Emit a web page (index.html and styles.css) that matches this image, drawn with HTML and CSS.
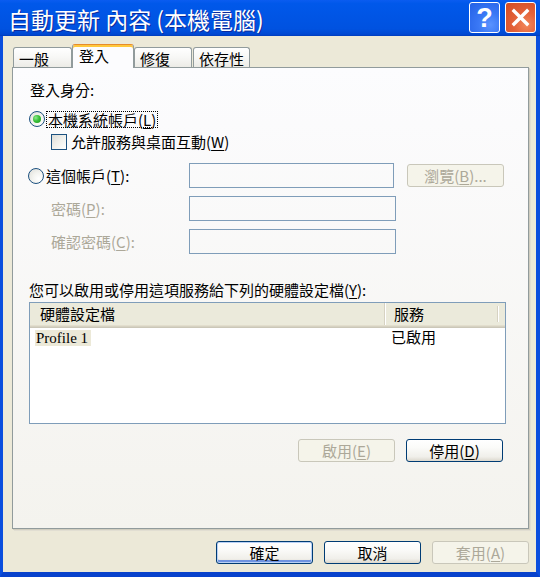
FILE: index.html
```html
<!DOCTYPE html>
<html>
<head>
<meta charset="utf-8">
<title>自動更新 內容 (本機電腦)</title>
<link rel="stylesheet" href="styles.css">
</head>
<body>
<div class="window">
  <div class="titlebar">
    <div class="title">自動更新 內容 (本機電腦)</div>
    <div class="tb-buttons">
      <div class="tb-btn help"><span class="qmark">?</span></div>
      <div class="tb-btn close">
        <svg class="xicon" viewBox="0 0 31 31" width="31" height="31"><path d="M8.5 8.5 L22.5 22.5 M22.5 8.5 L8.5 22.5" stroke="#fff" stroke-width="3.6" stroke-linecap="square" fill="none"/></svg>
      </div>
    </div>
  </div>
  <div class="client">
    <div class="tabs">
      <div class="tab t1">一般</div>
      <div class="tab sel t2">登入</div>
      <div class="tab t3">修復</div>
      <div class="tab t4">依存性</div>
    </div>
    <div class="panel">
      <div class="line">登入身分:</div>
      <div class="line radio-row"><span class="radio on"></span><span class="focus">本機系統帳戶(<u>L</u>)</span></div>
      <div class="line check-row"><span class="check"></span><span>允許服務與桌面互動(<u>W</u>)</span></div>
      <div class="acct">
        <div class="line acct-radio"><span class="radio"></span><span>這個帳戶(<u>T</u>):</span></div>
        <div class="field f1"></div>
        <div class="btn disabled browse">瀏覽(<u>B</u>)...</div>
        <div class="sub dis">密碼(<u>P</u>):</div>
        <div class="field"></div>
        <div></div>
        <div class="sub dis">確認密碼(<u>C</u>):</div>
        <div class="field"></div>
        <div></div>
      </div>
      <div class="line list-label">您可以啟用或停用這項服務給下列的硬體設定檔(<u>Y</u>):</div>
      <div class="list">
        <div class="list-head">
          <div class="col c1">硬體設定檔</div>
          <div class="col c2">服務</div>
          <div class="col c3"></div>
        </div>
        <div class="list-row">
          <div class="cell c1"><span class="profile">Profile 1</span></div>
          <div class="cell c2">已啟用</div>
        </div>
      </div>
      <div class="panel-btns">
        <div class="btn disabled">啟用(<u>E</u>)</div>
        <div class="btn">停用(<u>D</u>)</div>
      </div>
    </div>
    <div class="footer">
      <div class="btn default">確定</div>
      <div class="btn">取消</div>
      <div class="btn disabled">套用(<u>A</u>)</div>
    </div>
  </div>
</div>
</body>
</html>
```
FILE: styles.css
```css
* { box-sizing: border-box; }
html, body { margin: 0; padding: 0; }
body {
  width: 540px;
  height: 577px;
  overflow: hidden;
  background: #ece9d8;
  font-family: "Noto Sans CJK TC", "Liberation Sans", sans-serif;
  font-size: 15px;
  color: #000;
}
u { text-decoration: underline; text-underline-offset: 2px; }

.window {
  width: 540px;
  height: 577px;
  display: flex;
  flex-direction: column;
}

/* title bar */
.titlebar {
  height: 36px;
  flex: none;
  display: flex;
  justify-content: space-between;
  align-items: flex-start;
  background: linear-gradient(180deg, #0a5cf0 0%, #0058ea 10%, #0055e5 45%, #0052e0 80%, #0048d2 95%, #003cbc 100%);
}
.title {
  color: #fff;
  font-size: 23px;
  line-height: 36px;
  padding: 1px 0 0 8px;
  white-space: nowrap;
  text-shadow: 1px 1px 0 #0b2a9c;
}
.tb-buttons {
  display: flex;
  gap: 5px;
  padding: 2px 4px 0 0;
}
.tb-btn {
  width: 31px;
  height: 31px;
  border: 1px solid #fff;
  border-radius: 3px;
  display: flex;
  align-items: center;
  justify-content: center;
  overflow: hidden;
}
.help {
  background: radial-gradient(circle at 70% 75%, #5a93ff 0%, #3a78f5 40%, #2360e6 100%);
}
.close {
  background: radial-gradient(circle at 70% 75%, #f2875b 0%, #e4633a 40%, #d44a22 100%);
}
.qmark {
  color: #fff;
  font-family: "Liberation Sans", sans-serif;
  font-weight: bold;
  font-size: 27px;
  line-height: 27px;
  margin-top: 1px;
}
.xicon { display: block; }

/* client */
.client {
  flex: 1;
  display: flex;
  flex-direction: column;
  border-left: 3px solid #0a4ede;
  border-right: 4px solid #0a4ede;
  border-bottom: 5px solid #0842cc;
  padding-top: 8px;
  background: #ece9d8;
}

/* tabs */
.tabs {
  display: flex;
  align-items: flex-end;
  height: 23px;
  margin-left: 10px;
  position: relative;
  z-index: 1;
}
.tab {
  height: 20px;
  border: 1px solid #919b9c;
  border-bottom: none;
  border-radius: 3px 3px 0 0;
  background: linear-gradient(180deg, #ffffff 0%, #f7f7f5 50%, #ecebe6 100%);
  padding-left: 5px;
  line-height: 21px;
  white-space: nowrap;
}
.t1 { width: 59px; }
.t2 { width: 62px; }
.t3 { width: 58px; }
.t4 { width: 57px; margin-left: 1px; }
.tab.sel {
  height: 24px;
  margin-bottom: -1px;
  background: #fcfcfe;
  border-top: 1px solid #e68b2c;
  box-shadow: inset 0 2px 0 #ffc83c;
  padding-left: 6px;
  line-height: 22px;
}

/* panel */
.panel {
  margin-left: 9px;
  width: 517px;
  height: 462px;
  flex: none;
  border: 1px solid #919b9c;
  background: linear-gradient(180deg, #fcfcfe 0%, #f4f3ee 100%);
  box-shadow: 1px 1px 0 #d0cdbf, 2px 2px 0 #e1ded2;
  padding: 12px 25px 0 17px;
  display: flex;
  flex-direction: column;
}
.line {
  height: 20px;
  line-height: 20px;
  display: flex;
  align-items: center;
  white-space: nowrap;
}
.radio-row { margin-top: 9px; }
.check-row { margin-top: 3px; padding-left: 21px; }

.radio {
  width: 16px;
  height: 16px;
  border: 1px solid #1c5180;
  border-radius: 50%;
  background: radial-gradient(circle at 70% 70%, #ffffff 0%, #f3f3ef 45%, #dcdcd7 100%);
  margin-left: -1px;
  margin-right: 2px;
  flex: none;
  display: flex;
  align-items: center;
  justify-content: center;
}
.radio.on::after {
  content: "";
  width: 8px;
  height: 8px;
  border-radius: 50%;
  background: radial-gradient(circle at 35% 35%, #8ee88e 0%, #3ac03a 45%, #17951a 100%);
}
.focus {
  outline: 1px dotted #000;
  outline-offset: 0;
  line-height: 15px;
  padding: 0 1px;
}
.check {
  width: 16px;
  height: 16px;
  border: 1px solid #1c5180;
  background: linear-gradient(135deg, #dcdcd7 0%, #f0f0ec 50%, #ffffff 100%);
  margin-right: 4px;
  flex: none;
}

/* account grid */
.acct {
  display: grid;
  grid-template-columns: 148px 207px 97px;
  grid-template-rows: 25px 25px 25px;
  column-gap: 11px;
  row-gap: 8px;
  margin-top: 11px;
  align-items: center;
}
.acct-radio { margin-left: -1px; }
.field {
  height: 25px;
  border: 1px solid #7f9db9;
  background: transparent;
}
.f1 { width: 205px; }
.sub {
  padding-left: 21px;
  white-space: nowrap;
}
.dis { color: #aca899; }
.browse { height: 23px; }

/* list */
.list-label { margin-top: 26px; margin-left: -1px; }
.list {
  margin-top: 2px;
  margin-left: -1px;
  margin-right: -3px;
  height: 122px;
  border: 1px solid #7f9db9;
  background: #fff;
}
.list-head {
  display: flex;
  height: 25px;
  background: #ebeadb;
  box-shadow: inset 0 -1px 0 #cbc7b8, inset 0 -2px 0 #d6d2c2, inset 0 -3px 0 #e2decd;
  line-height: 22px;
}
.col { height: 22px; white-space: nowrap; }
.col.c1 { width: 354px; padding-left: 10px; }
.col.c2 { width: 113px; padding-left: 9px; border-left: 1px solid #d6d2c2; box-shadow: inset 1px 0 0 #fff; }
.col.c3 { flex: 1; border-left: 1px solid #d6d2c2; box-shadow: inset 1px 0 0 #fff; margin-top: 3px; height: 16px; }
.list-row {
  display: flex;
  height: 16px;
  line-height: 16px;
  margin-top: 1px;
}
.cell.c1 { width: 354px; padding-left: 5px; }
.cell.c2 { padding-left: 7px; white-space: nowrap; }
.profile {
  display: inline-block;
  background: #ece9d8;
  font-family: "Liberation Serif", serif;
  font-size: 15px;
  padding: 0 3px 0 1px;
  line-height: 16px;
}

.panel-btns {
  display: flex;
  justify-content: flex-end;
  gap: 11px;
  margin-top: 15px;
}

/* buttons */
.btn {
  width: 97px;
  height: 23px;
  border: 1px solid #003c74;
  border-radius: 3px;
  background: linear-gradient(180deg, #ffffff 0%, #fbfbf9 35%, #f0efea 80%, #dcd8cd 100%);
  display: flex;
  align-items: center;
  justify-content: center;
  white-space: nowrap;
  line-height: 20px;
}
.btn.disabled {
  border-color: #c9c7ba;
  background: #f5f4ea;
  color: #aca899;
}
.btn.default {
  box-shadow: inset 0 0 0 1px #b9d1f5, inset 0 -2px 0 1px #6f93e0;
}

.footer {
  display: flex;
  justify-content: flex-end;
  gap: 11px;
  margin-top: 12px;
  padding-right: 7px;
}
```
